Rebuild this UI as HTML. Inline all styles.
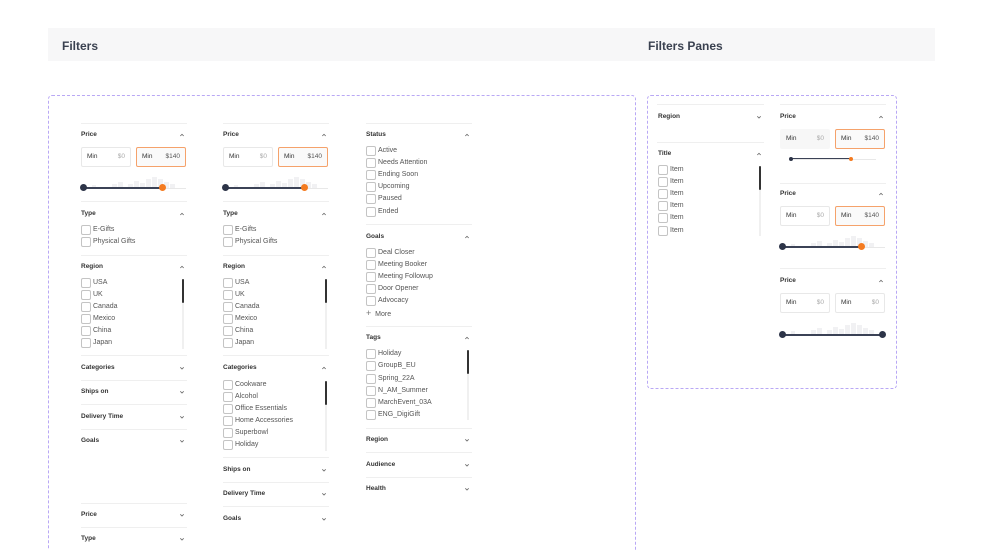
<!DOCTYPE html>
<html style="overflow:hidden;height:550px"><head><meta charset="utf-8">
<style>
*{box-sizing:border-box;margin:0;padding:0}
html,body{overflow:hidden}
body{width:1000px;height:550px;background:#fff;font-family:"Liberation Sans",sans-serif;position:relative;color:#444}
.a{position:absolute}
.band{left:48px;top:28px;width:887px;height:33px;background:#f7f7f8}
.t{font-weight:bold;font-size:12px;color:#3a4150;top:39px}
.box{border:1px dashed #b9a8f5;border-radius:4px}
.h{position:absolute;font-size:6.5px;font-weight:bold;color:#333;line-height:8px}
.dv{position:absolute;height:1px;background:#efefef}
.cv{position:absolute;width:8px;height:8px}
.i{position:absolute;font-size:7px;color:#555;line-height:8px;padding-left:12px;white-space:nowrap}
.i:before{content:"";position:absolute;left:0;top:-1px;width:8px;height:8px;border:1px solid #c4c4c4;border-radius:2px;background:#fff}
.in{position:absolute;width:50px;height:20px;border:1px solid #e8e8e8;border-radius:2px;font-size:6.5px;line-height:18px;padding:0 5px;color:#333}
.in span{float:right;color:#aaa}
.in.o{border-color:#f5a26b;background:#fafafa}
.in.o span{color:#555}
.sb{position:absolute;width:2px;background:#f0f0f0}
.sb i{position:absolute;left:0;width:2px;background:#333;border-radius:1px}
.tr{position:absolute;height:1px;background:#e8e8e8}
.fl{position:absolute;height:2px;background:#3b4256}
.dot{position:absolute;width:7px;height:7px;border-radius:50%;background:#2d3448}
.dot.or{background:#f47b20}
.bar{position:absolute;background:#f1f1f3;bottom:0}
</style></head><body>
<div class="a" style="left:0;top:0;width:1000px;height:550px;overflow:hidden">
<div class="a band"></div>
<div class="a t" style="left:62px">Filters</div>
<div class="a t" style="left:648px">Filters Panes</div>
<div class="a box" style="left:48px;top:95px;width:588px;height:480px"></div>
<div class="a box" style="left:647px;top:95px;width:250px;height:294px"></div>

<svg width="0" height="0" style="position:absolute"><defs>
<symbol id="u" viewBox="0 0 8 8"><path d="M2.3 5 L4 3.3 L5.7 5" fill="none" stroke="#666" stroke-width="0.8"/></symbol>
<symbol id="d" viewBox="0 0 8 8"><path d="M2.3 3.3 L4 5 L5.7 3.3" fill="none" stroke="#666" stroke-width="0.8"/></symbol>
</defs></svg>

<!-- Column 1 -->
<div class="dv" style="left:81px;top:123px;width:106px"></div>
<div class="h" style="left:81px;top:131px">Price</div><svg class="cv" style="left:178px;top:131px"><use href="#u"/></svg>
<div class="in" style="left:81px;top:147px">Min<span>$0</span></div>
<div class="in o" style="left:136px;top:147px">Min<span>$140</span></div>
<div class="a" style="left:84px;top:176px;width:102px;height:12px">
<div class="bar" style="left:8px;width:4px;height:3px"></div><div class="bar" style="left:28px;width:5px;height:4px"></div><div class="bar" style="left:34px;width:5px;height:6px"></div><div class="bar" style="left:44px;width:5px;height:4px"></div><div class="bar" style="left:50px;width:5px;height:7px"></div><div class="bar" style="left:56px;width:5px;height:5px"></div><div class="bar" style="left:62px;width:5px;height:9px"></div><div class="bar" style="left:68px;width:5px;height:11px"></div><div class="bar" style="left:74px;width:5px;height:9px"></div><div class="bar" style="left:80px;width:5px;height:6px"></div><div class="bar" style="left:86px;width:5px;height:4px"></div></div>
<div class="tr" style="left:84px;top:188px;width:102px"></div><div class="fl" style="left:84px;top:187px;width:79px"></div>
<div class="dot" style="left:80px;top:184px"></div><div class="dot or" style="left:159px;top:184px"></div>
<div class="dv" style="left:81px;top:201px;width:106px"></div>
<div class="h" style="left:81px;top:210px">Type</div><svg class="cv" style="left:178px;top:210px"><use href="#u"/></svg>
<div class="i" style="left:81px;top:226px">E-Gifts</div>
<div class="i" style="left:81px;top:238px">Physical Gifts</div>
<div class="dv" style="left:81px;top:255px;width:106px"></div>
<div class="h" style="left:81px;top:263px">Region</div><svg class="cv" style="left:178px;top:263px"><use href="#u"/></svg>
<div class="i" style="left:81px;top:279px">USA</div><div class="i" style="left:81px;top:291px">UK</div><div class="i" style="left:81px;top:303px">Canada</div><div class="i" style="left:81px;top:315px">Mexico</div><div class="i" style="left:81px;top:327px">China</div><div class="i" style="left:81px;top:339px">Japan</div>
<div class="sb" style="left:182px;top:279px;height:70px"><i style="top:0;height:24px"></i></div>
<div class="dv" style="left:81px;top:355px;width:106px"></div>
<div class="h" style="left:81px;top:364px">Categories</div><svg class="cv" style="left:178px;top:364px"><use href="#d"/></svg>
<div class="dv" style="left:81px;top:380px;width:106px"></div>
<div class="h" style="left:81px;top:388px">Ships on</div><svg class="cv" style="left:178px;top:388px"><use href="#d"/></svg>
<div class="dv" style="left:81px;top:404px;width:106px"></div>
<div class="h" style="left:81px;top:413px">Delivery Time</div><svg class="cv" style="left:178px;top:413px"><use href="#d"/></svg>
<div class="dv" style="left:81px;top:429px;width:106px"></div>
<div class="h" style="left:81px;top:437px">Goals</div><svg class="cv" style="left:178px;top:437px"><use href="#d"/></svg>
<div class="dv" style="left:81px;top:503px;width:106px"></div>
<div class="h" style="left:81px;top:511px">Price</div><svg class="cv" style="left:178px;top:511px"><use href="#d"/></svg>
<div class="dv" style="left:81px;top:527px;width:106px"></div>
<div class="h" style="left:81px;top:535px">Type</div><svg class="cv" style="left:178px;top:535px"><use href="#d"/></svg>

<!-- Column 2 -->
<div class="dv" style="left:223px;top:123px;width:106px"></div>
<div class="h" style="left:223px;top:131px">Price</div><svg class="cv" style="left:320px;top:131px"><use href="#u"/></svg>
<div class="in" style="left:223px;top:147px">Min<span>$0</span></div>
<div class="in o" style="left:278px;top:147px">Min<span>$140</span></div>
<div class="a" style="left:226px;top:176px;width:102px;height:12px">
<div class="bar" style="left:8px;width:4px;height:3px"></div><div class="bar" style="left:28px;width:5px;height:4px"></div><div class="bar" style="left:34px;width:5px;height:6px"></div><div class="bar" style="left:44px;width:5px;height:4px"></div><div class="bar" style="left:50px;width:5px;height:7px"></div><div class="bar" style="left:56px;width:5px;height:5px"></div><div class="bar" style="left:62px;width:5px;height:9px"></div><div class="bar" style="left:68px;width:5px;height:11px"></div><div class="bar" style="left:74px;width:5px;height:9px"></div><div class="bar" style="left:80px;width:5px;height:6px"></div><div class="bar" style="left:86px;width:5px;height:4px"></div></div>
<div class="tr" style="left:226px;top:188px;width:102px"></div><div class="fl" style="left:226px;top:187px;width:79px"></div>
<div class="dot" style="left:222px;top:184px"></div><div class="dot or" style="left:301px;top:184px"></div>
<div class="dv" style="left:223px;top:201px;width:106px"></div>
<div class="h" style="left:223px;top:210px">Type</div><svg class="cv" style="left:320px;top:210px"><use href="#u"/></svg>
<div class="i" style="left:223px;top:226px">E-Gifts</div>
<div class="i" style="left:223px;top:238px">Physical Gifts</div>
<div class="dv" style="left:223px;top:255px;width:106px"></div>
<div class="h" style="left:223px;top:263px">Region</div><svg class="cv" style="left:320px;top:263px"><use href="#u"/></svg>
<div class="i" style="left:223px;top:279px">USA</div><div class="i" style="left:223px;top:291px">UK</div><div class="i" style="left:223px;top:303px">Canada</div><div class="i" style="left:223px;top:315px">Mexico</div><div class="i" style="left:223px;top:327px">China</div><div class="i" style="left:223px;top:339px">Japan</div>
<div class="sb" style="left:325px;top:279px;height:70px"><i style="top:0;height:24px"></i></div>
<div class="dv" style="left:223px;top:355px;width:106px"></div>
<div class="h" style="left:223px;top:364px">Categories</div><svg class="cv" style="left:320px;top:364px"><use href="#u"/></svg>
<div class="i" style="left:223px;top:381px">Cookware</div><div class="i" style="left:223px;top:393px">Alcohol</div><div class="i" style="left:223px;top:405px">Office Essentials</div><div class="i" style="left:223px;top:417px">Home Accessories</div><div class="i" style="left:223px;top:429px">Superbowl</div><div class="i" style="left:223px;top:441px">Holiday</div>
<div class="sb" style="left:325px;top:381px;height:70px"><i style="top:0;height:24px"></i></div>
<div class="dv" style="left:223px;top:457px;width:106px"></div>
<div class="h" style="left:223px;top:466px">Ships on</div><svg class="cv" style="left:320px;top:466px"><use href="#d"/></svg>
<div class="dv" style="left:223px;top:482px;width:106px"></div>
<div class="h" style="left:223px;top:490px">Delivery Time</div><svg class="cv" style="left:320px;top:490px"><use href="#d"/></svg>
<div class="dv" style="left:223px;top:506px;width:106px"></div>
<div class="h" style="left:223px;top:515px">Goals</div><svg class="cv" style="left:320px;top:515px"><use href="#d"/></svg>

<!-- Column 3 -->
<div class="dv" style="left:366px;top:123px;width:106px"></div>
<div class="h" style="left:366px;top:131px">Status</div><svg class="cv" style="left:463px;top:131px"><use href="#u"/></svg>
<div class="i" style="left:366px;top:147px">Active</div><div class="i" style="left:366px;top:159px">Needs Attention</div><div class="i" style="left:366px;top:171px">Ending Soon</div><div class="i" style="left:366px;top:183px">Upcoming</div><div class="i" style="left:366px;top:195px">Paused</div><div class="i" style="left:366px;top:208px">Ended</div>
<div class="dv" style="left:366px;top:224px;width:106px"></div>
<div class="h" style="left:366px;top:233px">Goals</div><svg class="cv" style="left:463px;top:233px"><use href="#u"/></svg>
<div class="i" style="left:366px;top:249px">Deal Closer</div><div class="i" style="left:366px;top:261px">Meeting Booker</div><div class="i" style="left:366px;top:273px">Meeting Followup</div><div class="i" style="left:366px;top:285px">Door Opener</div><div class="i" style="left:366px;top:297px">Advocacy</div>
<div class="a" style="left:366px;top:309px;font-size:7px;color:#555;line-height:9px"><span style="font-size:9px;color:#777">+</span>&nbsp; More</div>
<div class="dv" style="left:366px;top:326px;width:106px"></div>
<div class="h" style="left:366px;top:334px">Tags</div><svg class="cv" style="left:463px;top:334px"><use href="#u"/></svg>
<div class="i" style="left:366px;top:350px">Holiday</div><div class="i" style="left:366px;top:362px">GroupB_EU</div><div class="i" style="left:366px;top:375px">Spring_22A</div><div class="i" style="left:366px;top:387px">N_AM_Summer</div><div class="i" style="left:366px;top:399px">MarchEvent_03A</div><div class="i" style="left:366px;top:411px">ENG_DigiGift</div>
<div class="sb" style="left:467px;top:350px;height:70px"><i style="top:0;height:24px"></i></div>
<div class="dv" style="left:366px;top:428px;width:106px"></div>
<div class="h" style="left:366px;top:436px">Region</div><svg class="cv" style="left:463px;top:436px"><use href="#d"/></svg>
<div class="dv" style="left:366px;top:452px;width:106px"></div>
<div class="h" style="left:366px;top:461px">Audience</div><svg class="cv" style="left:463px;top:461px"><use href="#d"/></svg>
<div class="dv" style="left:366px;top:477px;width:106px"></div>
<div class="h" style="left:366px;top:485px">Health</div><svg class="cv" style="left:463px;top:485px"><use href="#d"/></svg>

<!-- Panes col A -->
<div class="dv" style="left:657px;top:104px;width:107px"></div>
<div class="h" style="left:658px;top:113px">Region</div><svg class="cv" style="left:755px;top:113px"><use href="#d"/></svg>
<div class="dv" style="left:657px;top:142px;width:107px"></div>
<div class="h" style="left:658px;top:150px">Title</div><svg class="cv" style="left:755px;top:150px"><use href="#u"/></svg>
<div class="i" style="left:658px;top:166px">Item</div><div class="i" style="left:658px;top:178px">Item</div><div class="i" style="left:658px;top:190px">Item</div><div class="i" style="left:658px;top:202px">Item</div><div class="i" style="left:658px;top:214px">Item</div><div class="i" style="left:658px;top:227px">Item</div>
<div class="sb" style="left:759px;top:166px;height:70px"><i style="top:0;height:24px"></i></div>

<!-- Panes col B -->
<div class="dv" style="left:780px;top:104px;width:106px"></div>
<div class="h" style="left:780px;top:113px">Price</div><svg class="cv" style="left:877px;top:113px"><use href="#u"/></svg>
<div class="in" style="left:780px;top:129px;background:#f7f7f7;border-color:#f7f7f7">Min<span>$0</span></div>
<div class="in o" style="left:835px;top:129px">Min<span>$140</span></div>
<div class="tr" style="left:790px;top:159px;width:86px"></div><div class="fl" style="left:790px;top:158px;width:60px;height:1px"></div>
<div class="dot" style="left:789px;top:157px;width:4px;height:4px"></div><div class="dot or" style="left:849px;top:157px;width:4px;height:4px"></div>
<div class="dv" style="left:780px;top:183px;width:106px"></div>
<div class="h" style="left:780px;top:190px">Price</div><svg class="cv" style="left:877px;top:190px"><use href="#u"/></svg>
<div class="in" style="left:780px;top:206px">Min<span>$0</span></div>
<div class="in o" style="left:835px;top:206px">Min<span>$140</span></div>
<div class="a" style="left:783px;top:235px;width:102px;height:12px">
<div class="bar" style="left:8px;width:4px;height:3px"></div><div class="bar" style="left:28px;width:5px;height:4px"></div><div class="bar" style="left:34px;width:5px;height:6px"></div><div class="bar" style="left:44px;width:5px;height:4px"></div><div class="bar" style="left:50px;width:5px;height:7px"></div><div class="bar" style="left:56px;width:5px;height:5px"></div><div class="bar" style="left:62px;width:5px;height:9px"></div><div class="bar" style="left:68px;width:5px;height:11px"></div><div class="bar" style="left:74px;width:5px;height:9px"></div><div class="bar" style="left:80px;width:5px;height:6px"></div><div class="bar" style="left:86px;width:5px;height:4px"></div></div>
<div class="tr" style="left:783px;top:247px;width:102px"></div><div class="fl" style="left:783px;top:246px;width:79px"></div>
<div class="dot" style="left:779px;top:243px"></div><div class="dot or" style="left:858px;top:243px"></div>
<div class="dv" style="left:780px;top:268px;width:106px"></div>
<div class="h" style="left:780px;top:277px">Price</div><svg class="cv" style="left:877px;top:277px"><use href="#u"/></svg>
<div class="in" style="left:780px;top:293px">Min<span>$0</span></div>
<div class="in" style="left:835px;top:293px">Min<span>$0</span></div>
<div class="a" style="left:783px;top:322px;width:102px;height:12px">
<div class="bar" style="left:8px;width:4px;height:3px"></div><div class="bar" style="left:28px;width:5px;height:4px"></div><div class="bar" style="left:34px;width:5px;height:6px"></div><div class="bar" style="left:44px;width:5px;height:4px"></div><div class="bar" style="left:50px;width:5px;height:7px"></div><div class="bar" style="left:56px;width:5px;height:5px"></div><div class="bar" style="left:62px;width:5px;height:9px"></div><div class="bar" style="left:68px;width:5px;height:11px"></div><div class="bar" style="left:74px;width:5px;height:9px"></div><div class="bar" style="left:80px;width:5px;height:6px"></div><div class="bar" style="left:86px;width:5px;height:4px"></div></div>
<div class="fl" style="left:783px;top:334px;width:100px"></div>
<div class="dot" style="left:779px;top:331px"></div><div class="dot" style="left:879px;top:331px"></div>
</div>
</body></html>
